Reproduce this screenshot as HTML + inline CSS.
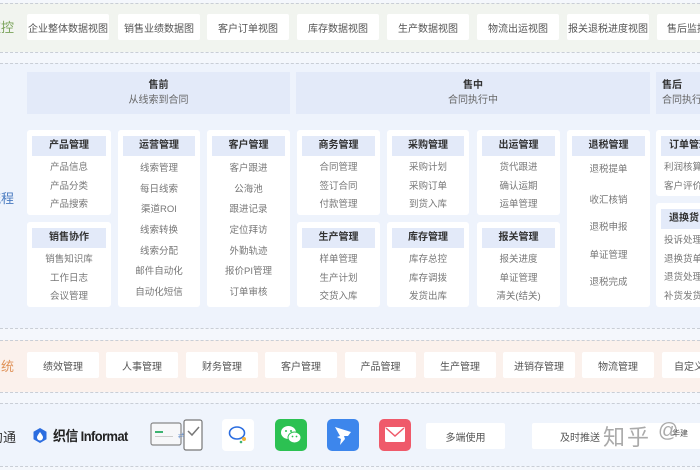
<!DOCTYPE html>
<html><head><meta charset="utf-8">
<style>
*{margin:0;padding:0;box-sizing:border-box}
body{width:700px;height:470px;overflow:hidden;background:#f4f7fc;font-family:"Liberation Sans","Noto Sans CJK SC",sans-serif;position:relative}
.a{position:absolute}
.dash{position:absolute;left:0;width:700px;border-top:1px dashed #c9ced6}
.btn{position:absolute;background:#fff;border-radius:2px;font-size:10px;color:#555;display:flex;align-items:center;justify-content:center;white-space:nowrap;overflow:hidden}
.hd{position:absolute;background:#e3eaf9;text-align:center;font-size:10px;color:#666;line-height:15px;padding-top:6px}
.hd b{color:#333;font-weight:bold;display:block}
.card{position:absolute;background:#fff;border-radius:3px;text-align:center;font-size:9.5px;color:#777}
.card .h{margin:6px 5px 3px;background:#e3eaf9;height:20px;line-height:20px;color:#333;font-weight:bold;font-size:10px}
.card div.i{height:18.5px;line-height:18.5px}
.lbl{position:absolute;font-size:13px}
</style></head><body>
<div class="a" style="left:0;top:3px;width:700px;height:49px;background:#f1f4ef"></div>
<div class="dash" style="top:3px"></div><div class="dash" style="top:52px"></div>
<div class="lbl" style="left:-12px;top:17px;color:#7aa35a">监控</div>
<div class="btn" style="left:27px;top:14px;width:82px;height:26px">企业整体数据视图</div>
<div class="btn" style="left:118px;top:14px;width:82px;height:26px">销售业绩数据图</div>
<div class="btn" style="left:207px;top:14px;width:82px;height:26px">客户订单视图</div>
<div class="btn" style="left:297px;top:14px;width:82px;height:26px">库存数据视图</div>
<div class="btn" style="left:387px;top:14px;width:82px;height:26px">生产数据视图</div>
<div class="btn" style="left:477px;top:14px;width:82px;height:26px">物流出运视图</div>
<div class="btn" style="left:567px;top:14px;width:82px;height:26px">报关退税进度视图</div>
<div class="btn" style="left:657px;top:14px;width:60px;height:26px;justify-content:flex-start;padding-left:10px">售后监控</div>
<div class="a" style="left:0;top:63px;width:700px;height:265px;background:#eef3fc"></div>
<div class="dash" style="top:63px"></div><div class="dash" style="top:328px"></div>
<div class="lbl" style="left:-12px;top:188px;color:#4a7bc0">流程</div>
<div class="hd" style="left:27px;top:72px;width:263px;height:42px"><b>售前</b>从线索到合同</div>
<div class="hd" style="left:296px;top:72px;width:354px;height:42px"><b>售中</b>合同执行中</div>
<div class="hd" style="left:656px;top:72px;width:60px;height:42px;text-align:left;padding-left:6px"><b>售后</b>合同执行</div>

<div class="card" style="left:27px;top:130px;width:84px;height:85px"><div class="h">产品管理</div><div class="i">产品信息</div><div class="i">产品分类</div><div class="i">产品搜索</div></div>
<div class="card" style="left:27px;top:222px;width:84px;height:85px"><div class="h">销售协作</div><div class="i">销售知识库</div><div class="i">工作日志</div><div class="i">会议管理</div></div>
<div class="card" style="left:118px;top:130px;width:82px;height:177px"><div class="h">运营管理</div><div class="i" style="height:20.7px;line-height:20.7px">线索管理</div><div class="i" style="height:20.7px;line-height:20.7px">每日线索</div><div class="i" style="height:20.7px;line-height:20.7px">渠道ROI</div><div class="i" style="height:20.7px;line-height:20.7px">线索转换</div><div class="i" style="height:20.7px;line-height:20.7px">线索分配</div><div class="i" style="height:20.7px;line-height:20.7px">邮件自动化</div><div class="i" style="height:20.7px;line-height:20.7px">自动化短信</div></div>
<div class="card" style="left:207px;top:130px;width:83px;height:177px"><div class="h">客户管理</div><div class="i" style="height:20.7px;line-height:20.7px">客户跟进</div><div class="i" style="height:20.7px;line-height:20.7px">公海池</div><div class="i" style="height:20.7px;line-height:20.7px">跟进记录</div><div class="i" style="height:20.7px;line-height:20.7px">定位拜访</div><div class="i" style="height:20.7px;line-height:20.7px">外勤轨迹</div><div class="i" style="height:20.7px;line-height:20.7px">报价PI管理</div><div class="i" style="height:20.7px;line-height:20.7px">订单审核</div></div>
<div class="card" style="left:297px;top:130px;width:83px;height:85px"><div class="h">商务管理</div><div class="i">合同管理</div><div class="i">签订合同</div><div class="i">付款管理</div></div>
<div class="card" style="left:297px;top:222px;width:83px;height:85px"><div class="h">生产管理</div><div class="i">样单管理</div><div class="i">生产计划</div><div class="i">交货入库</div></div>
<div class="card" style="left:387px;top:130px;width:82px;height:85px"><div class="h">采购管理</div><div class="i">采购计划</div><div class="i">采购订单</div><div class="i">到货入库</div></div>
<div class="card" style="left:387px;top:222px;width:82px;height:85px"><div class="h">库存管理</div><div class="i">库存总控</div><div class="i">库存调拨</div><div class="i">发货出库</div></div>
<div class="card" style="left:477px;top:130px;width:83px;height:85px"><div class="h">出运管理</div><div class="i">货代跟进</div><div class="i">确认运期</div><div class="i">运单管理</div></div>
<div class="card" style="left:477px;top:222px;width:83px;height:85px"><div class="h">报关管理</div><div class="i">报关进度</div><div class="i">单证管理</div><div class="i">清关(结关)</div></div>
<div class="card" style="left:567px;top:130px;width:83px;height:177px"><div class="h">退税管理</div><div class="i" style="height:27.5px;line-height:22px">退税提单</div><div class="i" style="height:27.5px;line-height:27px">收汇核销</div><div class="i" style="height:27.5px;line-height:27px">退税申报</div><div class="i" style="height:27.5px;line-height:27px">单证管理</div><div class="i" style="height:27.5px;line-height:27px">退税完成</div></div>
<div class="card" style="left:656px;top:130px;width:60px;height:66px;text-align:left"><div class="h" style="padding-left:8px">订单管理</div><div class="i" style="padding-left:8px">利润核算</div><div class="i" style="padding-left:8px">客户评价</div></div>
<div class="card" style="left:656px;top:203px;width:60px;height:104px;text-align:left"><div class="h" style="padding-left:8px">退换货</div><div class="i" style="padding-left:8px">投诉处理</div><div class="i" style="padding-left:8px">退换货单</div><div class="i" style="padding-left:8px">退货处理</div><div class="i" style="padding-left:8px">补货发货</div></div>
<div class="a" style="left:0;top:340px;width:700px;height:52px;background:#fbf1ec"></div>
<div class="dash" style="top:340px"></div><div class="dash" style="top:392px"></div>
<div class="lbl" style="left:-12px;top:356px;color:#e0935a">系统</div>
<div class="btn" style="left:27px;top:352px;width:72px;height:26px">绩效管理</div>
<div class="btn" style="left:106px;top:352px;width:72px;height:26px">人事管理</div>
<div class="btn" style="left:186px;top:352px;width:72px;height:26px">财务管理</div>
<div class="btn" style="left:265px;top:352px;width:72px;height:26px">客户管理</div>
<div class="btn" style="left:345px;top:352px;width:71px;height:26px">产品管理</div>
<div class="btn" style="left:424px;top:352px;width:72px;height:26px">生产管理</div>
<div class="btn" style="left:503px;top:352px;width:72px;height:26px">进销存管理</div>
<div class="btn" style="left:582px;top:352px;width:72px;height:26px">物流管理</div>
<div class="btn" style="left:662px;top:352px;width:60px;height:26px;justify-content:flex-start;padding-left:12px">自定义</div>
<div class="a" style="left:0;top:403px;width:700px;height:63px;background:#eff4fc"></div>
<div class="dash" style="top:403px"></div><div class="dash" style="top:466px"></div>
<div class="lbl" style="left:-10px;top:427px;color:#333">沟通</div>
<svg class="a" style="left:33px;top:428px" width="14" height="15" viewBox="0 0 14 15"><polygon points="7,0 13.5,3.7 13.5,11.3 7,15 0.5,11.3 0.5,3.7" fill="#2b6de0"/><path d="M7 4 C9 7 10 8 10 9.5 A3 3 0 0 1 4 9.5 C4 8 5 7 7 4Z" fill="#fff"/></svg>
<div class="a" style="left:53px;top:426px;font-size:14px;font-weight:bold;color:#222;letter-spacing:-0.6px;transform:scaleX(0.92);transform-origin:left">织信 Informat</div>
<svg class="a" style="left:150px;top:419px" width="55" height="32" viewBox="0 0 55 32"><rect x="1" y="4" width="30" height="22" rx="2" fill="#f6f7f9" stroke="#888" stroke-width="1.2"/><rect x="5" y="12" width="8" height="2" fill="#3cb371"/><rect x="5" y="17" width="18" height="1" fill="#ccc"/><rect x="34" y="1" width="18" height="30" rx="2" fill="#fff" stroke="#777" stroke-width="1.2"/><path d="M38 12 l4 4 l7 -8" stroke="#777" stroke-width="1.5" fill="none"/><text x="28" y="19" font-size="6" fill="#4a7bc0">⇄</text></svg>
<div class="a" style="left:222px;top:419px;width:32px;height:32px;background:#fff;border-radius:4px"></div>
<svg class="a" style="left:228px;top:425px" width="22" height="20" viewBox="0 0 22 20"><ellipse cx="9" cy="8" rx="7.5" ry="6" fill="none" stroke="#2b6de0" stroke-width="1.6"/><circle cx="16" cy="14" r="2" fill="#f3b23a"/><circle cx="13" cy="17" r="1.3" fill="#3cb371"/></svg>
<div class="a" style="left:275px;top:419px;width:32px;height:32px;background:#2cc152;border-radius:5px"></div>
<svg class="a" style="left:279px;top:424px" width="24" height="22" viewBox="0 0 24 22"><ellipse cx="9.5" cy="8.5" rx="7.5" ry="6.5" fill="#fff"/><ellipse cx="15.5" cy="13.5" rx="6.5" ry="5.5" fill="#fff" stroke="#2cc152" stroke-width="1"/><circle cx="7" cy="7" r="1" fill="#2cc152"/><circle cx="12" cy="7" r="1" fill="#2cc152"/><circle cx="13.5" cy="12.5" r="0.9" fill="#2cc152"/><circle cx="17.5" cy="12.5" r="0.9" fill="#2cc152"/></svg>
<div class="a" style="left:327px;top:419px;width:32px;height:32px;background:#3d86ec;border-radius:5px"></div>
<svg class="a" style="left:333px;top:424px" width="20" height="22" viewBox="0 0 20 22"><path d="M2 3 L18 8 L15 12 L11 12 L12 15 L7 21 L8 15 L4 13 L7 12 Z" fill="#fff"/></svg>
<div class="a" style="left:379px;top:419px;width:32px;height:32px;background:#ef5a6a;border-radius:5px"></div>
<svg class="a" style="left:384px;top:426px" width="22" height="17" viewBox="0 0 22 17"><rect x="1" y="1" width="20" height="15" rx="1.5" fill="#fff"/><path d="M2 2 L11 10 L20 2" stroke="#ef5a6a" stroke-width="1.5" fill="none"/></svg>
<div class="btn" style="left:426px;top:423px;width:79px;height:26px">多端使用</div>
<div class="btn" style="left:532px;top:423px;width:180px;height:26px;justify-content:flex-start;padding-left:28px">及时推送</div>
<div class="a" style="left:603px;top:420px;font-size:22px;color:#aaa;letter-spacing:2px">知乎</div>
<div class="a" style="left:658px;top:420px;font-size:20px;color:#aaa">@</div>
<div class="a" style="left:672px;top:428px;font-size:8px;color:#555">华建</div>
</body></html>
